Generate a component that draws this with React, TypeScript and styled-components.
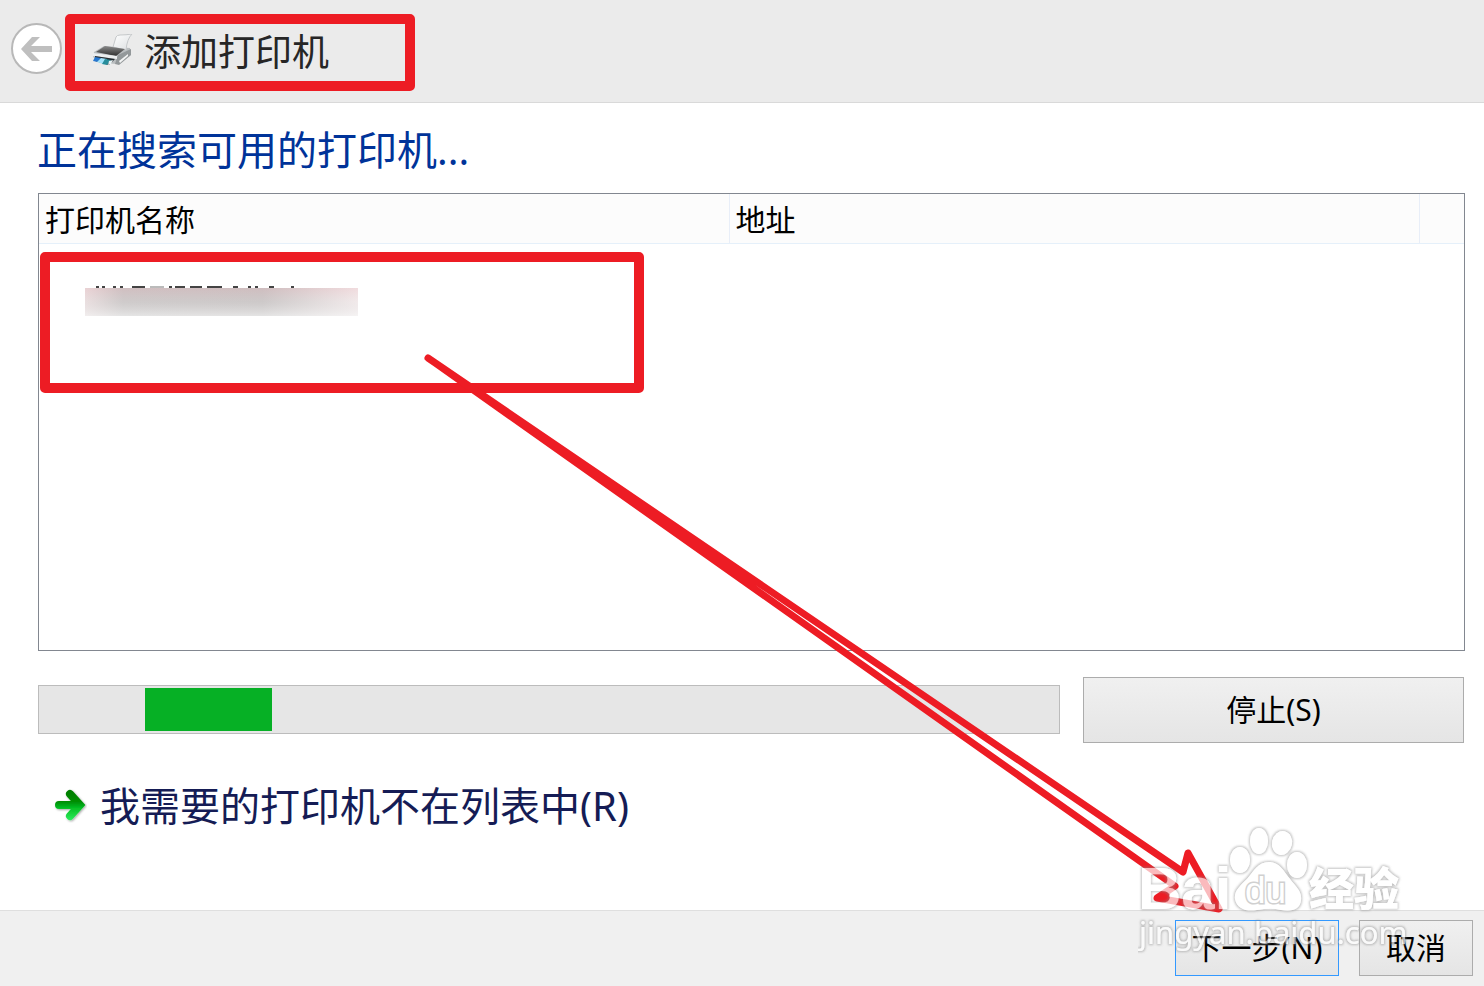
import React from "react";
import styled, { createGlobalStyle } from "styled-components";

const RED = "#ed1c24";

const GlobalStyle = createGlobalStyle`
  * { box-sizing: border-box; }
  body {
    margin: 0;
    background: #fff;
    color: #000;
    font-family: "Noto Sans", "Noto Sans CJK SC", sans-serif;
    font-size: 30px;
    font-weight: 400;
    line-height: 40px;
  }
  button { font: inherit; color: inherit; }
`;

const Page = styled.div`
  position: relative;
  display: flex;
  flex-direction: column;
  min-height: 100vh;
`;

const Header = styled.header`
  display: flex;
  align-items: center;
  gap: 3px;
  padding: 14px 11px 11px;
  background: #ebebeb;
  border-bottom: 1px solid #d9d9d9;
`;

const BackButton = styled.button`
  display: flex;
  align-items: center;
  justify-content: center;
  width: 51px;
  height: 51px;
  margin-bottom: 8px;
  padding: 0;
  border: 2px solid #b8b8b8;
  border-radius: 50%;
  background: #fff;
`;

const TitleFrame = styled.div`
  display: flex;
  align-items: center;
  gap: 11px;
  width: 350px;
  height: 77px;
  padding: 0 17px 2px;
  border: 10px solid ${RED};
  border-radius: 5px;
`;

const Title = styled.h1`
  margin: 0;
  font-size: 37px;
  line-height: 56px;
  font-weight: inherit;
  color: #262626;
`;

const Main = styled.main`
  display: flex;
  flex: 1;
  flex-direction: column;
  padding: 17px 19px 0 37px;
`;

const Heading = styled.h2`
  margin: 0 0 13px;
  font-size: 40px;
  line-height: 60px;
  font-weight: inherit;
  color: #003399;
`;

const ListBox = styled.div`
  height: 458px;
  margin-left: 1px;
  border: 1px solid #828790;
`;

const PrinterTable = styled.table`
  width: 100%;
  table-layout: fixed;
  border-collapse: separate;
  border-spacing: 0;
`;

const ColumnHead = styled.th<{ $width?: string }>`
  width: ${(p) => p.$width ?? "auto"};
  height: 50px;
  padding: 2px 6px 0;
  background: #fcfcfc;
  border-right: 1px solid #e8eef8;
  border-bottom: 1px solid #e5f0fa;
  font-weight: inherit;
  text-align: left;
  &:last-child { border-right: 0; }
`;

const PrinterCell = styled.td`
  padding: 8px 0 0 1px;
`;

const RowFrame = styled.div`
  width: 604px;
  height: 141px;
  padding: 26px 35px;
  border: 10px solid ${RED};
  border-radius: 5px;
`;

const HiddenName = styled.svg`
  display: block;
`;

const ProgressRow = styled.div`
  display: flex;
  align-items: flex-start;
  gap: 23px;
  margin-top: 26px;
  padding: 0 1px;
`;

const ProgressTrack = styled.div`
  flex: 1;
  height: 49px;
  margin-top: 8px;
  padding: 2px 106px;
  background: #e6e6e6;
  border: 1px solid #bcbcbc;
`;

const ProgressChunk = styled.div`
  width: 127px;
  height: 43px;
  background: #06b025;
`;

const Button = styled.button<{ $width: number; $height: number; $primary?: boolean }>`
  width: ${(p) => p.$width}px;
  height: ${(p) => p.$height}px;
  padding: 0;
  border: 1px solid ${(p) => (p.$primary ? "#3399ff" : "#acacac")};
  background: linear-gradient(#f0f0f0, #e5e5e5);
  white-space: nowrap;
`;

const MissingLink = styled.a`
  display: flex;
  align-items: center;
  align-self: flex-start;
  gap: 13px;
  margin: 33px 0 48px 17px;
  font-size: 40px;
  line-height: 60px;
  color: #151c55;
  text-decoration: none;
`;

const Footer = styled.footer`
  display: flex;
  justify-content: flex-end;
  gap: 20px;
  padding: 9px 11px 10px;
  background: #f0f0f0;
  border-top: 1px solid #dfdfdf;
`;

const Overlay = styled.svg`
  position: absolute;
  inset: 0;
  width: 100%;
  height: 100%;
  pointer-events: none;
`;

const Watermark = styled.svg`
  position: absolute;
  right: 74px;
  bottom: 26px;
  pointer-events: none;
`;

function BackArrow() {
  return (
    <svg width="32" height="24" viewBox="0 0 32 24" aria-hidden="true">
      <path d="M0 12 11 0h8l-9 9h21v6H10l9 9h-8Z" fill="#bfbfbf" />
    </svg>
  );
}

function PrinterIcon() {
  return (
    <svg width="41" height="36" viewBox="0 0 41 36" aria-hidden="true">
      <defs>
        <linearGradient id="paper" x1="0" y1="0" x2="1" y2="1">
          <stop offset="0" stopColor="#fff" />
          <stop offset="1" stopColor="#dcdfe1" />
        </linearGradient>
        <linearGradient id="lid" x1="0" y1="0" x2="0" y2="1">
          <stop offset="0" stopColor="#8a8a8a" />
          <stop offset="1" stopColor="#303030" />
        </linearGradient>
      </defs>
      <path d="m2 18 10-6 26 2 1 7-13 9-18-1-7-6Z" fill="#b9bdbf" />
      <path d="m26 21 13-6v6L27 31l-4-1Z" fill="#93989a" />
      <path d="M21 13 24 3q1-2 4-2 6 0 12-1-5 5-6 16Z" fill="url(#paper)" stroke="#c5c8ca" />
      <path d="m4 18 9-6 20 3-9 7Z" fill="url(#lid)" />
      <path d="m1 19 24 3v3L1 22Z" fill="#eceeef" />
      <path d="m3 22 20 3-6 6-14-4Z" fill="#242b30" />
      <path d="m3 23 6 1-3 4-5-1Z" fill="#2878d0" />
      <path d="m9 24 6 1-4 5-6-2Z" fill="#a3e2fa" />
      <path d="m13 25 6 1-4 5-5-1Z" fill="#278d9b" />
      <path d="m17 27 4-1-2 4-3 1Z" fill="#e9f2f4" />
      <path d="m27 27 9-7v2l-8 7Z" fill="#f3f4f4" />
    </svg>
  );
}

function GreenArrow() {
  return (
    <svg width="33" height="34" viewBox="0 0 33 34" aria-hidden="true">
      <defs>
        <linearGradient id="green" x1="0" y1="1" x2="0" y2="31" gradientUnits="userSpaceOnUse">
          <stop offset="0" stopColor="#007c00" />
          <stop offset="0.4" stopColor="#048f06" />
          <stop offset="0.6" stopColor="#06bf24" />
          <stop offset="1" stopColor="#2ceb5c" />
        </linearGradient>
        <filter id="soft" x="-20%" y="-20%" width="150%" height="150%">
          <feDropShadow dx="1" dy="1" stdDeviation="1" floodOpacity="0.35" />
        </filter>
      </defs>
      <g fill="none" stroke="url(#green)" strokeWidth="8" strokeLinecap="round" filter="url(#soft)">
        <path d="M5 16h10v.1h9" />
        <path d="M16 5l10 11-10 11" strokeLinejoin="miter" />
      </g>
    </svg>
  );
}

function BlurredName() {
  return (
    <HiddenName width="273" height="28" viewBox="0 0 273 28" overflow="visible" role="img" aria-label="打印机">
      <defs>
        <linearGradient id="smearX">
          <stop offset="0" stopColor="#eee0e1" />
          <stop offset="0.14" stopColor="#cac5c5" />
          <stop offset="0.65" stopColor="#c8c3c3" />
          <stop offset="1" stopColor="#f8eeef" />
        </linearGradient>
        <linearGradient id="smearY" x1="0" y1="0" x2="0" y2="1">
          <stop offset="0" stopColor="#e0b0b6" stopOpacity="0.3" />
          <stop offset="0.5" stopColor="#ddd" stopOpacity="0.25" />
          <stop offset="1" stopColor="#f4f6f6" stopOpacity="0.65" />
        </linearGradient>
      </defs>
      <path
        d="M11 -1h3M17 -1h3M28 -1h3M35 -1h3M47 -1h13M84 -1h3M90 -1h10M105 -1h12M122 -1h15M148 -1h5M163 -1h3M170 -1h3M184 -1h5M206 -1h3"
        stroke="#444"
        strokeWidth="2"
      />
      <path d="M65 -1h14" stroke="#bbb" strokeWidth="2" />
      <rect width="273" height="28" fill="url(#smearX)" />
      <rect width="273" height="28" fill="url(#smearY)" />
    </HiddenName>
  );
}

function RedArrow() {
  return (
    <Overlay viewBox="0 0 1484 986" preserveAspectRatio="none" aria-hidden="true">
      <path
        d="M428 358 1183 872 1188 853 1219 909 1157 898 1175 886Z"
        fill="none"
        stroke={RED}
        strokeWidth="7"
        strokeLinejoin="round"
      />
      <path d="M1157 898 1168 892 1166 898Z" fill={RED} stroke={RED} strokeWidth="5" strokeLinejoin="round" />
    </Overlay>
  );
}

function BaiduMark() {
  return (
    <Watermark width="272" height="136" viewBox="0 0 272 136" aria-hidden="true">
      <defs>
        <filter id="rim" x="-5%" y="-10%" width="110%" height="120%">
          <feMorphology in="SourceAlpha" operator="dilate" radius="1" result="wide" />
          <feGaussianBlur in="wide" stdDeviation="1" result="halo" />
          <feComposite in="halo" in2="SourceAlpha" operator="out" result="edge" />
          <feFlood floodColor="#888" floodOpacity="0.5" />
          <feComposite in2="edge" operator="in" result="tint" />
          <feComponentTransfer in="SourceGraphic" result="body">
            <feFuncA type="linear" slope="0.7" />
          </feComponentTransfer>
          <feMerge>
            <feMergeNode in="tint" />
            <feMergeNode in="body" />
          </feMerge>
        </filter>
      </defs>
      <g fill="#fff" filter="url(#rim)">
        <ellipse cx="121" cy="17" rx="9" ry="13" />
        <ellipse cx="144" cy="19" rx="10" ry="12" transform="rotate(12 144 19)" />
        <ellipse cx="102" cy="36" rx="10" ry="13" />
        <ellipse cx="159" cy="41" rx="10" ry="13" />
        <path d="M131 38c11 0 15 10 21 17 6 8 12 12 11 21-1 10-10 12-20 10-8-2-16-1-24 0-10 2-20-1-22-11-1-8 5-13 12-20 7-8 11-17 22-17Z" />
        <text x="0" y="85" fontFamily="Liberation Sans" fontWeight="700" fontSize="60">Bai</text>
        <text x="171" y="82" fontFamily="Noto Sans CJK SC" fontWeight="900" fontSize="45">经验</text>
      </g>
      <text
        x="107"
        y="79"
        fontFamily="Liberation Sans"
        fontSize="37"
        fill="#fff"
        stroke="#d0d0d0"
        strokeWidth="3"
        paintOrder="stroke"
      >
        du
      </text>
      <g filter="url(#rim)">
        <text x="1" y="120" fontFamily="Noto Sans" fontWeight="400" fontSize="31" fill="#fff">
          jingyan.baidu.com
        </text>
      </g>
    </Watermark>
  );
}

export default function App() {
  return (
    <>
      <GlobalStyle />
      <Page>
        <Header>
          <BackButton type="button" aria-label="返回">
            <BackArrow />
          </BackButton>
          <TitleFrame>
            <PrinterIcon />
            <Title>添加打印机</Title>
          </TitleFrame>
        </Header>
        <Main>
          <Heading>正在搜索可用的打印机...</Heading>
          <ListBox>
            <PrinterTable>
              <thead>
                <tr>
                  <ColumnHead scope="col">打印机名称</ColumnHead>
                  <ColumnHead scope="col">地址</ColumnHead>
                  <ColumnHead $width="44px" aria-hidden="true" />
                </tr>
              </thead>
              <tbody>
                <tr>
                  <PrinterCell colSpan={3}>
                    <RowFrame>
                      <BlurredName />
                    </RowFrame>
                  </PrinterCell>
                </tr>
              </tbody>
            </PrinterTable>
          </ListBox>
          <ProgressRow>
            <ProgressTrack role="progressbar" aria-label="搜索">
              <ProgressChunk />
            </ProgressTrack>
            <Button type="button" $width={381} $height={66}>停止(S)</Button>
          </ProgressRow>
          <MissingLink href="#manual">
            <GreenArrow />
            我需要的打印机不在列表中(R)
          </MissingLink>
        </Main>
        <Footer>
          <Button type="button" $width={164} $height={56} $primary>下一步(N)</Button>
          <Button type="button" $width={114} $height={56}>取消</Button>
        </Footer>
        <RedArrow />
        <BaiduMark />
      </Page>
    </>
  );
}
